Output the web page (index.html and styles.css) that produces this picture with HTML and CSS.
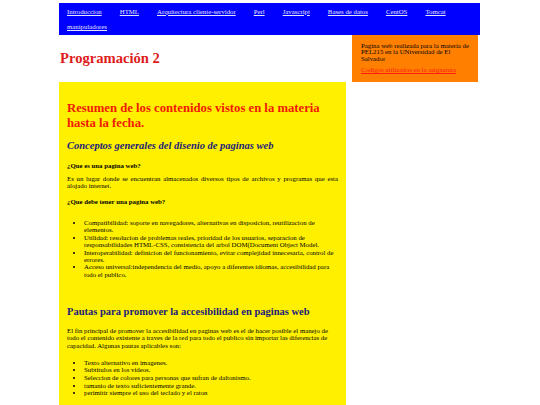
FILE: index.html
```html
<!DOCTYPE html>
<html lang="es">
<head>
<meta charset="utf-8">
<title>Programación 2</title>
<link rel="stylesheet" href="styles.css">
</head>
<body>
<div class="page">
  <nav class="nav">
    <a href="#">Introduccion</a>
    <a href="#">HTML</a>
    <a href="#">Arquitectura cliente-servidor</a>
    <a href="#">Perl</a>
    <a href="#">Javascript</a>
    <a href="#">Bases de datos</a>
    <a href="#">CentOS</a>
    <a href="#">Tomcat</a>
    <a href="#">manipuladores</a>
  </nav>
  <div class="cols">
    <div class="main-col">
      <h1 class="title">Programación 2</h1>
      <section class="content">
        <h2 class="summary">Resumen de los contenidos vistos en la materia hasta la fecha.</h2>
        <h3 class="topic topic-italic">Conceptos generales del disenio de paginas web</h3>
        <h4 class="question">¿Que es una pagina web?</h4>
        <p class="text">Es un lugar donde se encuentran almacenados diversos tipos de archivos y programas que esta alojado internet.</p>
        <h4 class="question question-2">¿Que debe tener una pagina web?</h4>
        <ul class="list list-1">
          <li>Compatibilidad: soporte en navegadores, alternativas en disposicion, reutilizacion de elementos.</li>
          <li>Utilidad: resolucion de problemas reales, prioridad de los usuarios, separacion de responsabilidades HTML-CSS, consistencia del arbol DOM(Document Object Model.</li>
          <li>Interoperabilidad: definicion del funcionamiento, evitar complejidad innecesaria, control de errores.</li>
          <li>Acceso universal:independencia del medio, apoyo a diferentes idiomas, accesibilidad para todo el publico.</li>
        </ul>
        <h3 class="topic topic-2">Pautas para promover la accesibilidad en paginas web</h3>
        <p class="text text-2">El fin principal de promover la accesibilidad en paginas web es el de hacer posible el manejo de todo el contenido existente a traves de la red para todo el publico sin importar las diferencias de capacidad. Algunas pautas aplicables son:</p>
        <ul class="list list-2">
          <li>Texto alternativo en imagenes.</li>
          <li>Subtitulos en los videos.</li>
          <li>Seleccion de colores para personas que sufran de daltonismo.</li>
          <li>tamanio de texto suficientemente grande.</li>
          <li>perimitir siempre el uso del teclado y el raton</li>
        </ul>
      </section>
    </div>
    <aside class="aside">
      <p class="aside-text">Pagina web realizada para la materia de PEL215 en la UNiversidad de El Salvador</p>
      <a class="aside-link" href="#">Codigos utilizados en la asignatura</a>
    </aside>
  </div>
</div>
</body>
</html>
```
FILE: styles.css
```css
html, body {
  margin: 0;
  padding: 0;
  background: #ffffff;
}

body {
  font-family: "Liberation Serif", "Times New Roman", serif;
  font-size: 6.8px;
  line-height: 1.15;
  color: #000000;
}

.page {
  width: 421px;
  margin: 3px 0 0 59px;
}

.nav {
  background: #0000ff;
  display: flex;
  flex-wrap: wrap;
  column-gap: 18px;
  row-gap: 8.2px;
  padding: 4.6px 8px 4px 8px;
}

.nav a {
  color: #e4e4ff;
  text-decoration: underline;
  line-height: 7.6px;
}

.cols {
  display: flex;
  gap: 6px;
  align-items: flex-start;
}

.main-col {
  width: 287px;
}

.title {
  margin: 0;
  padding: 15px 0 15.5px 1px;
  font-size: 14.6px;
  line-height: 16.5px;
  font-weight: bold;
  color: #e01b1b;
}

.content {
  background: #fff000;
  padding: 19px 8px 20px 8px;
}

.summary {
  margin: 0;
  font-size: 12.7px;
  line-height: 14.6px;
  color: #f21a00;
}

.topic {
  margin: 10px 0 0 0;
  font-size: 10.5px;
  line-height: 12px;
  color: #1c1c7a;
}

.topic-italic {
  font-style: italic;
}

.topic-2 {
  margin-top: 28px;
}

.question {
  margin: 10px 0 0 0;
  font-size: 6.8px;
  line-height: 7.6px;
  font-weight: bold;
}

.question-2 {
  margin-top: 8.5px;
}

.text {
  margin: 5px 0 0 0;
  text-align: justify;
  line-height: 7.6px;
}

.text-2 {
  margin-top: 8.5px;
  text-align: left;
}

.list {
  margin: 13px 0 0 0;
  padding-left: 17px;
  line-height: 7.4px;
}

.list-2 {
  margin-top: 9px;
  line-height: 7.7px;
}

.aside {
  width: 126px;
  box-sizing: border-box;
  background: #ff8000;
  padding: 7.6px 6px 7.6px 9px;
}

.aside-text {
  margin: 0;
  line-height: 6.6px;
}

.aside-link {
  display: block;
  margin-top: 4.9px;
  line-height: 6.8px;
  color: #ff1a1a;
  text-decoration: underline;
}
```
